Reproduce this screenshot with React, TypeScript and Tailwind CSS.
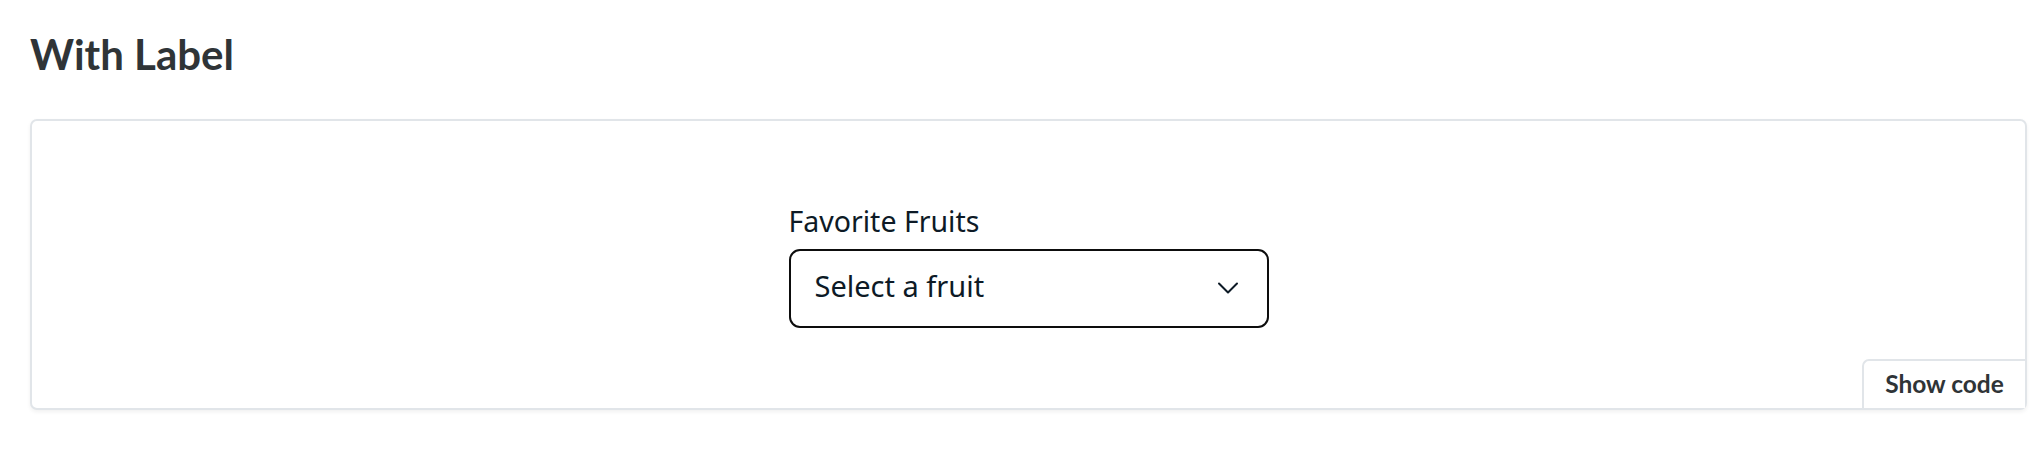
import { ChevronDown } from 'lucide-react';

function SelectField() {
  return (
    <div className="flex flex-col gap-[9px]">
      <label className="font-['Noto_Sans',sans-serif] text-[28.5px] leading-[38px] text-[#0d1a26]">
        Favorite Fruits
      </label>
      <div className="flex h-[79px] w-[480px] items-center justify-between rounded-[11px] border-2 border-[#0d0d0d] pl-[24px] pr-[21px]">
        <span className="mb-[5px] font-['Noto_Sans',sans-serif] text-[29px] leading-none text-[#0d1a26]">
          Select a fruit
        </span>
        <ChevronDown className="h-[36px] w-[36px] text-[#0d1a26]" strokeWidth={1.35} />
      </div>
    </div>
  );
}

export default function App() {
  return (
    <div className="min-h-screen bg-white pl-[30px] pr-[15px] pt-[29px]">
      <h3 className="m-0 font-['Lato',sans-serif] text-[42px] font-bold leading-[50px] text-[#2f3437]">
        With Label
      </h3>

      <div className="relative mt-[40px] flex h-[291px] items-center justify-center rounded-[7px] border-2 border-[#e1e5e9] bg-white shadow-[0_2px_4px_rgba(0,0,0,0.06)]">
        <SelectField />

        <button
          type="button"
          className="absolute bottom-0 right-0 flex h-[49px] w-[163px] items-center justify-center rounded-tl-[7px] border-l-2 border-t-2 border-[#e1e5e9] bg-white font-['Lato',sans-serif] text-[24.5px] font-bold text-[#2f3437]"
        >
          Show code
        </button>
      </div>
    </div>
  );
}
